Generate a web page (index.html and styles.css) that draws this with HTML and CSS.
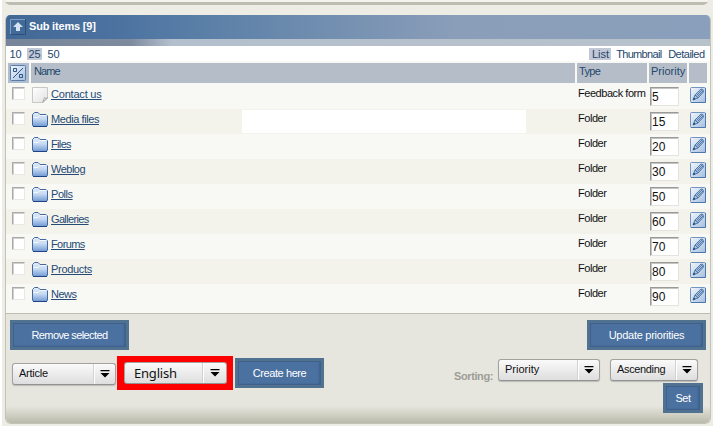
FILE: index.html
```
<!DOCTYPE html>
<html lang="en">
<head>
<meta charset="utf-8">
<title>Sub items</title>
<link rel="stylesheet" href="styles.css">
</head>
<body>
<svg class="defs" width="0" height="0" aria-hidden="true">
  <defs>
    <linearGradient id="blue" x1="0" y1="0" x2="0" y2="1"><stop offset="0" stop-color="#e2ebf9"/><stop offset=".45" stop-color="#c8dbf3"/><stop offset="1" stop-color="#7098d2"/></linearGradient>
    <linearGradient id="tile" x1="0" y1="0" x2="1" y2="1"><stop offset="0" stop-color="#f1f6fc"/><stop offset="1" stop-color="#a4bfe0"/></linearGradient>
    <linearGradient id="paper" x1="0" y1="0" x2="1" y2="1"><stop offset="0" stop-color="#fff"/><stop offset="1" stop-color="#e2e2e2"/></linearGradient>
    <symbol id="folder" viewBox="0 0 16 16"><path d="M.5 13V2.500L2.500 .5H6L8 2.500H14L15.500 4V13L14.500 14.500H1.500Z" fill="url(#blue)" stroke="#41699f"/><path d="M1.500 5.500H6L8 3.500H14.500" fill="none" stroke="#f4f8fd"/><path d="M1 14.500H15" stroke="#1d4388"/></symbol>
    <symbol id="page" viewBox="0 0 16 16"><path d="M.5 .5H15.500V11L11 15.500H.500Z" fill="url(#paper)" stroke="#c8c8c8"/><path d="M15.500 11Q13 12 12.500 10.500Q12 13 10.500 15.500Z" fill="#f4f4f4" stroke="#999" stroke-width=".8"/></symbol>
    <symbol id="edit" viewBox="0 0 16 16"><rect x=".5" y=".5" width="15" height="15" rx="1" fill="url(#tile)" stroke="#7294c0"/><path d="M1 15.500H15.500V1" fill="none" stroke="#4d76ac"/><path d="M3 13L5 8L11 2Q13.500 1.500 13.500 5L8 11Z" fill="#a9c3e3" stroke="#355f91" stroke-width=".8"/><path d="M5 8L8 11M6.500 8.500L12 3M7.500 9.500L13 4" stroke="#355f91" stroke-width=".7"/><path d="M3 13L4 10.500L5.500 12Z" fill="#173e70"/></symbol>
    <symbol id="toggle" viewBox="0 0 16 16"><rect x=".5" y=".5" width="15" height="15" rx="1" fill="url(#tile)" stroke="#587da9"/><path d="M3.500 3.500H6.500V6.500H3.500ZM9.500 9.500H12.500V12.500H9.500ZM3 13L13 3" fill="none" stroke="#2e5583"/></symbol>
    <symbol id="arrow" viewBox="0 0 10 8"><path d="M.5 0H9.500V1.200H.5ZM.5 3H9.500L5 7.500Z"/></symbol>
  </defs>
</svg>
<div class="rule-top"></div>
<section class="panel">
  <header class="head">
    <span class="up"><svg width="16" height="16" viewBox="0 0 16 16"><path d="M.5 15V.5H15" fill="none" stroke="#7f9fc5"/><path d="M.5 15.500H15.500V.5" fill="none" stroke="#28507f"/><path d="M8 3L13 8H10V12H6V8H3Z" fill="#d3e3f5"/></svg></span>
    <h2 class="title">Sub items [9]</h2>
  </header>
  <div class="strip"></div>
  <nav class="tools">
    <span class="opt">10</span><span class="opt on">25</span><span class="opt">50</span>
    <span class="grow"></span>
    <span class="opt on list">List</span><span class="opt thumb">Thumbnail</span><span class="opt detail">Detailed</span>
  </nav>
  <div class="grid thead"><span class="tog"><svg width="16" height="16"><use href="#toggle"/></svg></span><span>Name</span><span>Type</span><span>Priority</span><span></span></div>
  <div class="rows" id="rows"></div>
  <footer class="foot">
    <div class="line first"><button class="btn remove">Remove selected</button><button class="btn update">Update priorities</button></div>
    <div class="line second">
      <div class="select article"><span>Article</span><i><svg width="10" height="8"><use href="#arrow"/></svg></i></div>
      <div class="mark"><div class="select english"><span>English</span><i><svg width="10" height="8"><use href="#arrow"/></svg></i></div></div>
      <button class="btn create">Create here</button>
      <span class="grow"></span>
      <span class="sorting">Sorting:</span>
      <div class="select prio"><span>Priority</span><i><svg width="10" height="8"><use href="#arrow"/></svg></i></div>
      <div class="select asc"><span>Ascending</span><i><svg width="10" height="8"><use href="#arrow"/></svg></i></div>
    </div>
    <div class="line third"><button class="btn set">Set</button></div>
  </footer>
</section>
<script src="rows.js"></script>
</body>
</html>
```
FILE: styles.css
```
* { box-sizing: border-box; }
body { margin: 0; height: 426px; overflow: hidden; background: linear-gradient(90deg, #fff 2px, #ededE5 2px); font: 11px/14px "Liberation Sans", Arial, sans-serif; color: #111; }
.defs { position: absolute; }
svg { display: block; }
.rule-top { height: 5px; border-top: 2px solid #f4f4ee; background: #bdbdb3; margin-left: 5px; margin-right: 5px; border-radius: 0 0 5px 5px; }
.panel { margin: 10px 0 0 5px; width: 706px; height: 409px; border: 1px solid #c2c2b8; border-top: 0; border-radius: 5px 5px 6px 6px; overflow: hidden; background: #f8f8f4; }
.head { display: flex; height: 24px; padding: 4px 0 0 4px; background: linear-gradient(90deg, #426996 0, #4a719f 100px, #577da6 180px, #8a9eb9 450px, #8a9fbb 100%); }
.title { margin: 0 0 0 3px; font: bold 11px/15px "Liberation Sans", Arial, sans-serif; color: #fff; letter-spacing: -.18px; }
.strip { height: 7px; background: linear-gradient(90deg, #77859a 0, #7e8b9f 125px, #b4bfcd 165px, #b7c2cb 100%); }
.tools { display: flex; align-items: center; height: 15px; padding: 0 4px 0 2px; background: #fff; color: #24476c; }
.opt { height: 12px; line-height: 13px; padding: 0 1.500px; margin-right: 3.700px; }
.opt.on { background: #c3c8d6; }
.tools .opt:last-child { margin-right: 0; }
.tools .list { padding: 0 2px 0 3px; }
.thumb { letter-spacing: -.68px; }
.detail { letter-spacing: -.5px; }
.grow { flex: 1; }
.grid { display: grid; grid-template-columns: 21px 544px 70px 38px 18px; column-gap: 2px; padding-left: 2px; }
.thead { height: 23px; padding-top: 2px; padding-bottom: 1px; color: #24476c; }
.thead span { background: #b5bdc8; padding: 1px 0 0 2px; }
.thead span:nth-child(2) { padding-left: 3px; letter-spacing: -.9px; }
.thead span:nth-child(3) { letter-spacing: -.7px; }
.thead .tog { padding: 2px; background: #b0bdcf; }
.rows { height: 228px; }
.row { height: 25px; background: #f8f8f5; }
.row:nth-child(even) { background: #f3f2eb; }
.check { display: block; width: 13px; height: 13px; margin: 3px 0 0 4px; background: #fff; border: 1px solid #e8e8e4; border-top-color: #aaa; border-left-color: #aaa; box-shadow: inset 1px 1px #d0d0cc; }
.name { display: flex; align-items: flex-start; position: relative; padding: 3px 0 0 1px; }
.name svg { margin-right: 3px; }
.name a { color: #244a75; text-decoration: underline; text-underline-offset: 1px; letter-spacing: var(--track); }
.type { padding: 2px 0 0 1px; white-space: nowrap; letter-spacing: -.6px; }
.type.folder { letter-spacing: -.45px; }
.row .type.wide { letter-spacing: -.45px; }
.num { width: 29px; height: 19px; margin: 3px 0 0 1px; padding: 1px 1px 0; background: #fff; border: 1px solid #e4e4df; border-top-color: #999; border-left-color: #999; box-shadow: inset 1px 1px #c4c4c0; font-size: 12px; line-height: 17px; }
.pen { padding: 3px 0 0 1px; }
.patch { position: absolute; left: 211px; top: 1px; width: 284px; height: 23px; background: #fff; }
.foot { height: 111px; margin-top: 1px; border-top: 1px solid #bcbdb5; padding-top: 6px; background: linear-gradient(#e6e6de 0, #e6e6de 92px, #b8b8a8 110px); }
.line { display: flex; }
.first { justify-content: space-between; padding: 0 4px; height: 30px; }
.second { height: 33px; padding: 0 12px 0 6px; margin-top: 6px; }
.third { justify-content: flex-end; padding-right: 7px; margin-top: -6px; }
.btn { height: 30px; padding: 0; border: 3px solid #50718f; background: #4a71a0; box-shadow: inset 0 0 0 1px #3e608a, inset -2px -1px 2px #3e618c; color: #fff; font: 11px/22px "Liberation Sans", Arial, sans-serif; }
.remove, .update { width: 119px; }
.remove { letter-spacing: -.6px; }
.update { letter-spacing: -.26px; }
.create { width: 89px; margin: 2px 0 0 2px; letter-spacing: -.4px; }
.set { width: 40px; letter-spacing: -.5px; }
.select { display: flex; width: 104px; height: 22px; border: 1px solid #a2a29f; border-bottom-color: #929290; border-radius: 3px; background: linear-gradient(#fafafa, #dedede); box-shadow: 0 1px 1px #bbb; line-height: 19px; }
.select span { flex: 1; padding-left: 6px; }
.select i { display: flex; width: 21px; align-items: center; justify-content: center; border-left: 1px solid #fff; box-shadow: -1px 0 #d2d2d0; }
.article { margin-top: 7px; letter-spacing: -.25px; }
.mark { width: 116px; height: 34px; margin-left: 1px; padding: 6px 6px 5px 7px; background: #f00; }
.english { width: 103px; font: 13px/21px "Noto Sans", sans-serif; box-shadow: none; }
.english span { padding-left: 9px; letter-spacing: -.2px; }
.english i { width: 23px; }
.sorting { font-weight: bold; color: #9d9d98; margin: 13px 5px 0 0; letter-spacing: -.4px; }
.prio { width: 102px; margin: 3px 10px 0 0; }
.asc { width: 88px; margin-top: 3px; letter-spacing: -.35px; }
```
FILE: rows.js
```
const items = [
  ["Contact us", "Feedback form", 5, -.2],
  ["Media files", "Folder", 15, -.42],
  ["Files", "Folder", 20, -.65],
  ["Weblog", "Folder", 30, -.5],
  ["Polls", "Folder", 50, -.45],
  ["Galleries", "Folder", 60, -.65],
  ["Forums", "Folder", 70, -.6],
  ["Products", "Folder", 80, -.3],
  ["News", "Folder", 90, -.5]
];
document.getElementById("rows").innerHTML = items.map(([name, type, priority, track], i) => `<div class="grid row"><span><span class="check"></span></span><span class="name"><svg width="16" height="16"><use href="#${i ? "folder" : "page"}"/></svg><a style="--track:${track}px">${name}</a>${i === 1 ? '<span class="patch"></span>' : ""}</span><span class="type ${i ? "folder" : "wide"}">${type}</span><span><div class="num">${priority}</div></span><span class="pen"><svg width="16" height="16"><use href="#edit"/></svg></span></div>`).join("");
```
